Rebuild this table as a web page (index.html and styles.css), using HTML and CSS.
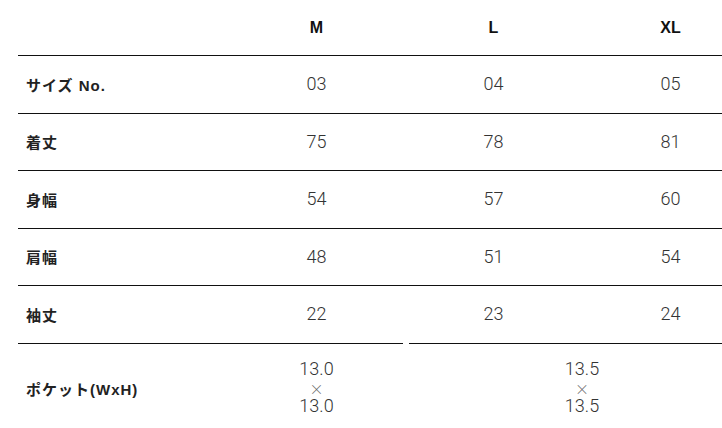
FILE: index.html
```html
<!DOCTYPE html>
<html lang="ja">
<head>
<meta charset="utf-8">
<link rel="stylesheet" href="styles.css">
</head>
<body>
<div class="wrap">
  <table class="size-table">
    <colgroup>
      <col class="c-label"><col class="c-val"><col class="c-val"><col class="c-val">
    </colgroup>
    <thead>
      <tr>
        <th class="label"></th>
        <th>M</th>
        <th>L</th>
        <th>XL</th>
      </tr>
    </thead>
    <tbody>
      <tr><th class="label">サイズ No.</th><td>03</td><td>04</td><td>05</td></tr>
      <tr><th class="label">着丈</th><td>75</td><td>78</td><td>81</td></tr>
      <tr><th class="label">身幅</th><td>54</td><td>57</td><td>60</td></tr>
      <tr><th class="label">肩幅</th><td>48</td><td>51</td><td>54</td></tr>
      <tr><th class="label">袖丈</th><td>22</td><td>23</td><td>24</td></tr>
      <tr class="pocket">
        <th class="label">ポケット(WxH)</th>
        <td class="m-cell">13.0<br><span class="x">×</span><br>13.0</td>
        <td class="span-cell" colspan="2">13.5<br><span class="x">×</span><br>13.5</td>
      </tr>
    </tbody>
  </table>
</div>
</body>
</html>
```

FILE: styles.css
```css
html, body {
  margin: 0;
  padding: 0;
  background: #fff;
}
.wrap {
  width: 722px;
  height: 428px;
  overflow: hidden;
  padding-left: 18px;
  box-sizing: border-box;
}
.size-table {
  border-collapse: separate;
  border-spacing: 0;
  width: 741px;
  table-layout: fixed;
}
.c-label { width: 210px; }
.c-val { width: 177px; }

.size-table thead th {
  height: 55px;
  padding: 0;
  font-family: "Liberation Sans", Arial, sans-serif;
  font-weight: bold;
  font-size: 16px;
  color: #111;
  text-align: center;
  vertical-align: middle;
}
.size-table tbody th,
.size-table tbody td {
  border-top: 1px solid #111;
  height: 56.5px;
  padding: 0;
  vertical-align: middle;
}
.size-table tbody th.label {
  text-align: left;
  padding-left: 8px;
  font-family: "Liberation Sans", "Noto Sans CJK JP", sans-serif;
  font-weight: bold;
  font-size: 15px;
  letter-spacing: 1px;
  color: #222;
}
.size-table tbody td {
  text-align: center;
  font-family: Roboto, "Noto Sans CJK JP", sans-serif;
  font-weight: 300;
  font-size: 18px;
  color: #333;
  line-height: 18.5px;
}
.size-table .pocket th,
.size-table .pocket td {
  height: 86px;
  padding-top: 2px;
}
.size-table .pocket td.m-cell {
  border-top: none;
  background: linear-gradient(#111, #111) no-repeat left top / calc(100% - 2px) 1px;
}
.size-table .pocket td.span-cell {
  border-top: none;
  background: linear-gradient(#111, #111) no-repeat right top / calc(100% - 4px) 1px;
}
.x {
  font-family: "Noto Sans CJK JP", sans-serif;
  font-size: 14px;
  color: #666;
}
```
